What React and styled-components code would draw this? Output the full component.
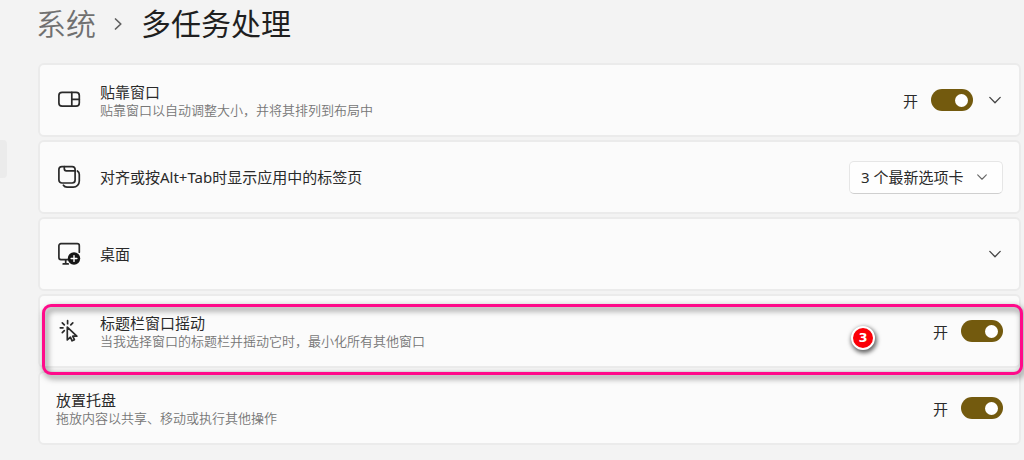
import React, { useState } from 'react';
import styled, { createGlobalStyle } from 'styled-components';

const GlobalStyle = createGlobalStyle`
  * {
    box-sizing: border-box;
  }

  body {
    margin: 0;
    background: #f3f3f3;
    color: #2a2a2a;
    font-family: 'Noto Sans', 'Noto Sans CJK SC', sans-serif;
    font-size: 15px;
    font-weight: 400;
  }
`;

const Shell = styled.div`
  display: flex;
  align-items: flex-start;
`;

const Rail = styled.nav`
  flex: none;
  width: 36px;
  padding-top: 140px;
`;

const RailLink = styled.a`
  display: block;
  width: 7px;
  height: 38px;
  border-radius: 0 4px 4px 0;
  background: #ebebeb;
`;

const Main = styled.main`
  flex: 1;
  min-width: 0;
  padding-right: 3px;
`;

const Breadcrumb = styled.h1`
  display: flex;
  align-items: center;
  gap: 18px;
  height: 48px;
  margin: 0 0 15px;
  color: #1f1f1f;
  font-size: 30px;
  line-height: 40px;
  font-weight: 400;
`;

const CrumbLink = styled.a`
  color: #707070;
  font-weight: 350;
  text-decoration: none;
`;

const CardList = styled.div`
  display: flex;
  flex-direction: column;
  gap: 3px;
  padding-left: 2px;
`;

const Card = styled.section`
  position: relative;
  display: flex;
  align-items: center;
  gap: 18px;
  min-height: 74px;
  padding: 0 16px;
  border: 2px solid #ebebeb;
  border-radius: 6px;
  background: #fbfbfb;
`;

const IconBox = styled.div`
  display: flex;
  flex: none;
  justify-content: center;
  width: 26px;
`;

const CardText = styled.div`
  flex: 1;
  min-width: 0;
`;

const CardTitle = styled.label`
  display: block;
  line-height: 20px;
`;

const CardNote = styled.p`
  margin: 0;
  color: #767676;
  font-size: 13px;
  line-height: 16px;
  font-weight: 350;
`;

const Controls = styled.div`
  display: flex;
  align-items: center;
  gap: 13px;
`;

const SwitchInput = styled.input`
  appearance: none;
  display: flex;
  align-items: center;
  justify-content: ${props => (props.checked ? 'flex-end' : 'flex-start')};
  width: 42px;
  height: 22px;
  margin: 0;
  padding: 0 5px;
  border-radius: 11px;
  background: ${props => (props.checked ? '#735a0e' : '#8a8a8a')};
  cursor: pointer;

  &::before {
    content: '';
    width: 13px;
    height: 13px;
    border-radius: 50%;
    background: #fff;
  }
`;

const ExpandButton = styled.button`
  display: flex;
  align-items: center;
  justify-content: center;
  width: 17px;
  height: 24px;
  padding: 0;
  border: none;
  background: none;
  color: #444;
  cursor: pointer;
`;

const SelectWrap = styled.div`
  display: grid;
  align-items: center;

  > * {
    grid-area: 1 / 1;
  }

  svg {
    justify-self: end;
    margin-right: 16px;
    color: #666;
    pointer-events: none;
  }
`;

const Select = styled.select`
  appearance: none;
  width: 154px;
  height: 33px;
  padding: 0 32px 0 11px;
  border: 1px solid #e6e6e6;
  border-bottom-color: #cfcfcf;
  border-radius: 5px;
  background: #fefefe;
  color: inherit;
  font: inherit;
`;

const Highlight = styled.div`
  position: absolute;
  inset: 8px -4px -9px 2px;
  z-index: 1;
  border: 3px solid #ff0a8a;
  border-radius: 9px;
  filter: drop-shadow(2px 3px 3px rgba(0, 0, 0, 0.6));
  pointer-events: none;
`;

const StepBadge = styled.span`
  position: absolute;
  top: 30px;
  right: 144px;
  z-index: 2;
  display: flex;
  align-items: center;
  justify-content: center;
  width: 24px;
  height: 24px;
  border: 2px solid #fff;
  border-radius: 50%;
  background: #fb0007;
  box-shadow: 1px 2px 4px 1px rgba(0, 0, 0, 0.6);
  color: #fff;
  font: bold 13px/20px 'DejaVu Sans', sans-serif;
`;

const Chevron = ({ size }) => (
  <svg width={size} height={size} viewBox="0 0 12 12" fill="none" stroke="currentColor" strokeWidth="1.3" strokeLinecap="round" strokeLinejoin="round">
    <path d="M.8 3.4 6 8.7l5.2-5.3" />
  </svg>
);

const CrumbArrow = () => (
  <svg width="9" height="14" viewBox="0 0 9 14" fill="none" stroke="#606060" strokeWidth="1.7" strokeLinecap="round" strokeLinejoin="round">
    <path d="M1.5 2l5.3 5-5.3 5" />
  </svg>
);

const Icon = ({ children }) => (
  <svg width="24" height="24" viewBox="0 0 24 24" fill="none" stroke="#2a2a2a" strokeWidth="1.7" strokeLinecap="round" strokeLinejoin="round">
    {children}
  </svg>
);

const SnapIcon = () => (
  <Icon>
    <rect x="1.9" y="4.4" width="20.4" height="13.8" rx="3.2" />
    <path d="M14.8 4.4v13.8M14.8 11.3h7.5" />
  </Icon>
);

const TabsIcon = () => (
  <Icon>
    <rect x="1.9" y="1.6" width="16.2" height="16.4" rx="3" />
    <path d="M7.3 1.6v2.2a2 2 0 0 0 2 2h8.8" />
    <path d="M20.4 6c1.2.8 1.9 2 1.9 3.5v6.6a6 6 0 0 1-6 6H10c-1.6 0-2.9-.7-3.6-1.9" />
  </Icon>
);

const DesktopIcon = () => (
  <Icon>
    <path d="M11 17.6H3.9a2 2 0 0 1-2-2V3.7a2 2 0 0 1 2-2h16.4a2 2 0 0 1 2 2v6.5" />
    <path d="M8.7 17.8v3.7M6.2 21.9h5" />
    <circle cx="17" cy="16.5" r="6.2" fill="#161616" stroke="none" />
    <path d="M17 13.6v5.8M14.1 16.5h5.8" stroke="#fff" strokeWidth="1.4" />
  </Icon>
);

const ShakeIcon = () => (
  <Icon>
    <path d="M10.6 1.7v3M5.3 3.9l2 2M15.8 3.9l-2 2M3.3 8.8H6M5.3 13.7l2-2" />
    <path d="M10.3 8.2v12.7l3.1-2.7 1.7 3.6 2.3-1.1-1.7-3.5h4.1z" />
  </Icon>
);

const Switch = ({ id }) => {
  const [on, setOn] = useState(true);

  return (
    <>
      <span>{on ? '开' : '关'}</span>
      <SwitchInput id={id} type="checkbox" role="switch" checked={on} onChange={e => setOn(e.target.checked)} />
    </>
  );
};

const App = () => {
  const [tabs, setTabs] = useState('3');

  return (
    <>
      <GlobalStyle />
      <Shell>
        <Rail>
          <RailLink href="#system" />
        </Rail>
        <Main>
          <Breadcrumb>
            <CrumbLink href="#system">系统</CrumbLink>
            <CrumbArrow />
            <span>多任务处理</span>
          </Breadcrumb>

          <CardList>
            <Card>
              <IconBox><SnapIcon /></IconBox>
              <CardText>
                <CardTitle id="snap-title" htmlFor="snap">贴靠窗口</CardTitle>
                <CardNote>贴靠窗口以自动调整大小，并将其排列到布局中</CardNote>
              </CardText>
              <Controls>
                <Switch id="snap" />
                <ExpandButton aria-labelledby="snap-title"><Chevron size={12} /></ExpandButton>
              </Controls>
            </Card>

            <Card>
              <IconBox><TabsIcon /></IconBox>
              <CardText>
                <CardTitle htmlFor="tabs">对齐或按Alt+Tab时显示应用中的标签页</CardTitle>
              </CardText>
              <SelectWrap>
                <Select id="tabs" value={tabs} onChange={e => setTabs(e.target.value)}>
                  <option value="3">3 个最新选项卡</option>
                </Select>
                <Chevron size={10} />
              </SelectWrap>
            </Card>

            <Card>
              <IconBox><DesktopIcon /></IconBox>
              <CardText>
                <CardTitle htmlFor="desktop">桌面</CardTitle>
              </CardText>
              <ExpandButton id="desktop"><Chevron size={12} /></ExpandButton>
            </Card>

            <Card>
              <IconBox><ShakeIcon /></IconBox>
              <CardText>
                <CardTitle htmlFor="shake">标题栏窗口摇动</CardTitle>
                <CardNote>当我选择窗口的标题栏并摇动它时，最小化所有其他窗口</CardNote>
              </CardText>
              <Controls>
                <Switch id="shake" />
              </Controls>
              <Highlight />
              <StepBadge>3</StepBadge>
            </Card>

            <Card>
              <CardText>
                <CardTitle htmlFor="tray">放置托盘</CardTitle>
                <CardNote>拖放内容以共享、移动或执行其他操作</CardNote>
              </CardText>
              <Controls>
                <Switch id="tray" />
              </Controls>
            </Card>
          </CardList>
        </Main>
      </Shell>
    </>
  );
};

export default App;
